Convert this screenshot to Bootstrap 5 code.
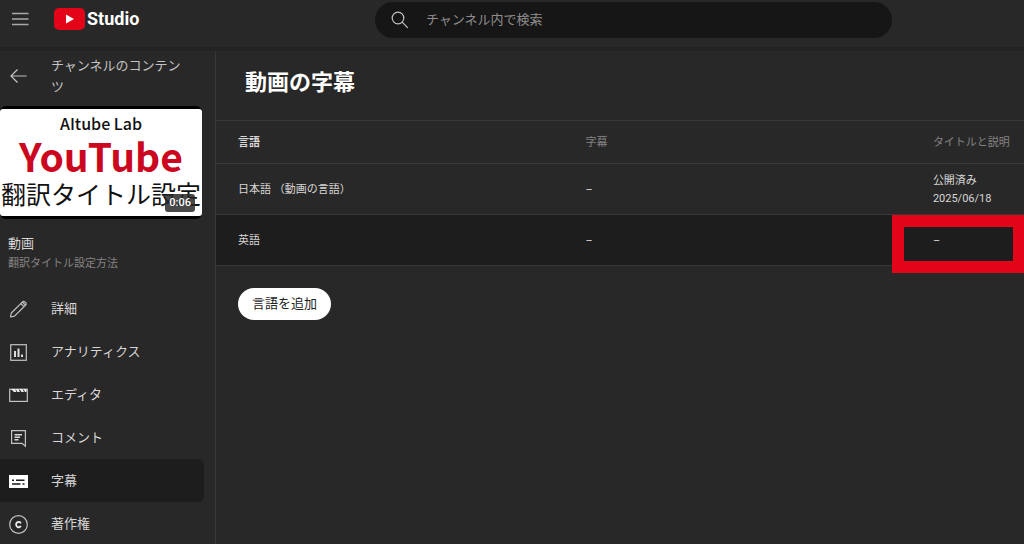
<!DOCTYPE html>
<html lang="ja">
<head>
<meta charset="utf-8">
<meta name="viewport" content="width=device-width, initial-scale=1">
<title>動画の字幕 - YouTube Studio</title>
<link href="https://cdn.jsdelivr.net/npm/bootstrap@5.3.0/dist/css/bootstrap.min.css" rel="stylesheet">
<style>
  body { background: #282828; color: #d8d6d6; font-family: Roboto, "Noto Sans CJK JP", sans-serif; font-size: 13px; line-height: 20px; }
  a { color: inherit; text-decoration: none; }
  svg { display: block; flex: none; }
  .topbar { height: 47px; padding-bottom: 9px; box-shadow: 0 4px 0 #232323; position: relative; }
  .brand-area { width: 375px; padding-left: 11px; gap: 24px; }
  .brand-link { gap: 2px; }
  .wordmark { font-family: Roboto, sans-serif; font-weight: 700; font-size: 18px; color: #fff; }
  .search { background: #161616; border-radius: 18px; height: 36px; margin: 1px 132px 0 0; padding: 0 16px; gap: 17px; }
  .search input { background: transparent; border: 0; outline: 0; color: #ddd; padding: 0; }
  .search input::placeholder { color: #8f8d8d; opacity: 1; }
  .side { width: 216px; border-right: 1px solid #383838; min-height: calc(100vh - 47px); }
  .back { padding: 8px 27px 9px 9px; gap: 22px; line-height: 21px; color: #c4c2c2; }
  .thumb { width: 202px; background: #000; border-radius: 6px; padding: 3px 0; }
  .thumb-art { background: #fff; border-radius: 3px; height: 107px; color: #111; font-family: "Noto Sans CJK JP", sans-serif; white-space: nowrap; }
  .art-top { font-size: 16px; font-weight: 500; line-height: 20px; padding-top: 4px; }
  .art-mid { font-size: 39px; font-weight: 700; line-height: 44px; color: #cc0820; }
  .art-low { font-size: 25px; line-height: 32px; }
  .duration { right: 7px; bottom: 7px; background: rgba(40,40,40,.85); color: #fff; border-radius: 3px; padding: 0 4px; font-size: 11px; font-weight: 500; line-height: 18px; }
  .about { padding: 15px 8px 13px; }
  .muted { color: #858383; }
  .fine { font-size: 11px; }
  .side-link { height: 43px; padding-left: 8px; gap: 22px; margin-right: 11px; border-radius: 0 6px 6px 0; flex-wrap: nowrap; }
  .side-link.active { background: #1d1d1d; }
  h1 { font-size: 22px; line-height: 32px; font-weight: 700; color: #fff; padding: 20px 29px 21px; margin: 0; }
  .langs { font-size: 11px; line-height: 18px; table-layout: fixed; width: 100%; border-top: 1px solid #383838; }
  .langs tr { border-bottom: 1px solid #383838; }
  .langs th, .langs td { padding: 1px 0 0 22px; }
  .langs thead tr { height: 43px; }
  .langs tbody tr { height: 51px; }
  .langs th { font-weight: 400; }
  .langs tr.hovered { background: #1d1d1d; }
  .w-lang { width: 43%; }
  .callout { top: 0; right: -1px; bottom: -8px; left: -19px; border: 12px solid #e30417; }
  .add { margin: 22px; padding: 6px 14px; font-size: 13px; line-height: 20px; background: #fff; color: #222; border: 0; }
  .add:hover { background: #eee; color: #222; }
</style>
</head>
<body class="overflow-hidden">
<header class="topbar d-flex align-items-center">
  <div class="brand-area d-flex align-items-center">
    <button class="btn p-0 border-0" type="button" aria-label="メニュー">
      <svg width="18" height="14" fill="none" stroke="#aaa8a8" stroke-width="1.4"><path d="M1 1.500h16.500M1 7h16.500M1 12.500h16.500"/></svg>
    </button>
    <a href="#" class="brand-link d-flex align-items-center" aria-label="Studio">
      <svg width="32" height="22" viewBox="0 0 32 22"><rect x="1" width="31" height="22" rx="5" fill="#e30417"/><path d="M13 6.500v9l8-4.500z" fill="#fff"/></svg>
      <span class="wordmark">Studio</span>
    </a>
  </div>
  <div class="search d-flex align-items-center flex-grow-1">
    <svg width="18" height="18" fill="none" stroke="#c4c2c2" stroke-width="1.2"><circle cx="7" cy="7" r="5.8"/><path d="M11.2 11.2l5.600 5.600"/></svg>
    <input class="flex-grow-1" type="search" placeholder="チャンネル内で検索" aria-label="チャンネル内で検索">
  </div>
</header>
<div class="d-flex">
  <aside class="side flex-shrink-0">
    <a href="#" class="back d-flex align-items-center">
      <svg width="20" height="16" fill="none" stroke="#c4c2c2" stroke-width="1.2"><path d="M8.500 1.500L2 8l6.500 6.500M2 8h15.500"/></svg>
      <span>チャンネルのコンテンツ</span>
    </a>
    <div class="thumb position-relative">
      <div class="thumb-art text-center overflow-hidden">
        <div class="art-top">AItube Lab</div>
        <div class="art-mid">YouTube</div>
        <div class="art-low">翻訳タイトル設定</div>
      </div>
      <span class="duration position-absolute">0:06</span>
    </div>
    <div class="about">
      <div>動画</div>
      <div class="fine muted">翻訳タイトル設定方法</div>
    </div>
    <nav class="nav flex-column">
      <a href="#" class="side-link d-flex align-items-center">
        <svg width="21" height="20" fill="none" stroke="#c4c2c2" stroke-width="1.200" stroke-linejoin="round"><path d="M2.500 18l.8-4L14.500 2.800a1.600 1.600 0 0 1 2.300 0l.9.9a1.600 1.600 0 0 1 0 2.300L6.500 17.200zM12.800 4.500l3.200 3.200M14.300 3l3.200 3.200"/></svg>
        <span>詳細</span></a>
      <a href="#" class="side-link d-flex align-items-center">
        <svg width="21" height="20"><rect x="2.700" y="2.700" width="15.600" height="15.600" fill="none" stroke="#c4c2c2" stroke-width="1.200"/><path d="M6 9h2v6H6zM9.500 6.500h2V15h-2zM13 12.500h2V15h-2z" fill="#dedcdc"/></svg>
        <span>アナリティクス</span></a>
      <a href="#" class="side-link d-flex align-items-center">
        <svg width="21" height="20"><rect x="1.700" y="4.200" width="17.600" height="12.200" fill="none" stroke="#c4c2c2" stroke-width="1.200"/><path d="M3 4h4l1.500 3H6zM7.500 4h3L12 7H9.500zM11.500 4h3L16 7h-2.500zM15.500 4h3v3h-1.500z" fill="#eee"/></svg>
        <span>エディタ</span></a>
      <a href="#" class="side-link d-flex align-items-center">
        <svg width="21" height="20" fill="none" stroke="#c4c2c2" stroke-width="1.200"><path d="M3.600 2.600h13.800v15.600L14 15.400H3.600z"/><path d="M6.500 6.800h7.500M6.500 9.300h5.500M6.500 11.800h4" stroke="#dedcdc" stroke-width="1.400"/></svg>
        <span>コメント</span></a>
      <a href="#" class="side-link active d-flex align-items-center" aria-current="page">
        <svg width="21" height="20"><path d="M1 4h19v13H1z" fill="#fff"/><path d="M4 9.200h2M8 9.200h8.500M4 13h8.500M14.500 13h2" stroke="#1d1d1d" stroke-width="1.500"/></svg>
        <span>字幕</span></a>
      <a href="#" class="side-link d-flex align-items-center">
        <svg width="21" height="20" fill="none" stroke="#c4c2c2" stroke-width="1.200"><circle cx="10.500" cy="10.500" r="8.800"/><path d="M12.800 9.300a2.500 2.700 0 1 0 0 2.600" stroke="#eee" stroke-width="1.800"/></svg>
        <span>著作権</span></a>
    </nav>
  </aside>
  <main class="flex-grow-1">
    <h1>動画の字幕</h1>
    <table class="langs">
      <thead>
        <tr><th class="w-lang fw-bold" scope="col">言語</th><th class="w-lang muted" scope="col">字幕</th><th class="muted text-nowrap" scope="col">タイトルと説明</th></tr>
      </thead>
      <tbody>
        <tr><td>日本語 （動画の言語）</td><td>–</td><td>公開済み<br>2025/06/18</td></tr>
        <tr class="hovered"><td>英語</td><td>–</td><td class="position-relative">–<span class="callout position-absolute"></span></td></tr>
      </tbody>
    </table>
    <button class="btn rounded-pill add" type="button">言語を追加</button>
  </main>
</div>
<script src="https://cdn.jsdelivr.net/npm/bootstrap@5.3.0/dist/js/bootstrap.bundle.min.js"></script>
</body>
</html>
